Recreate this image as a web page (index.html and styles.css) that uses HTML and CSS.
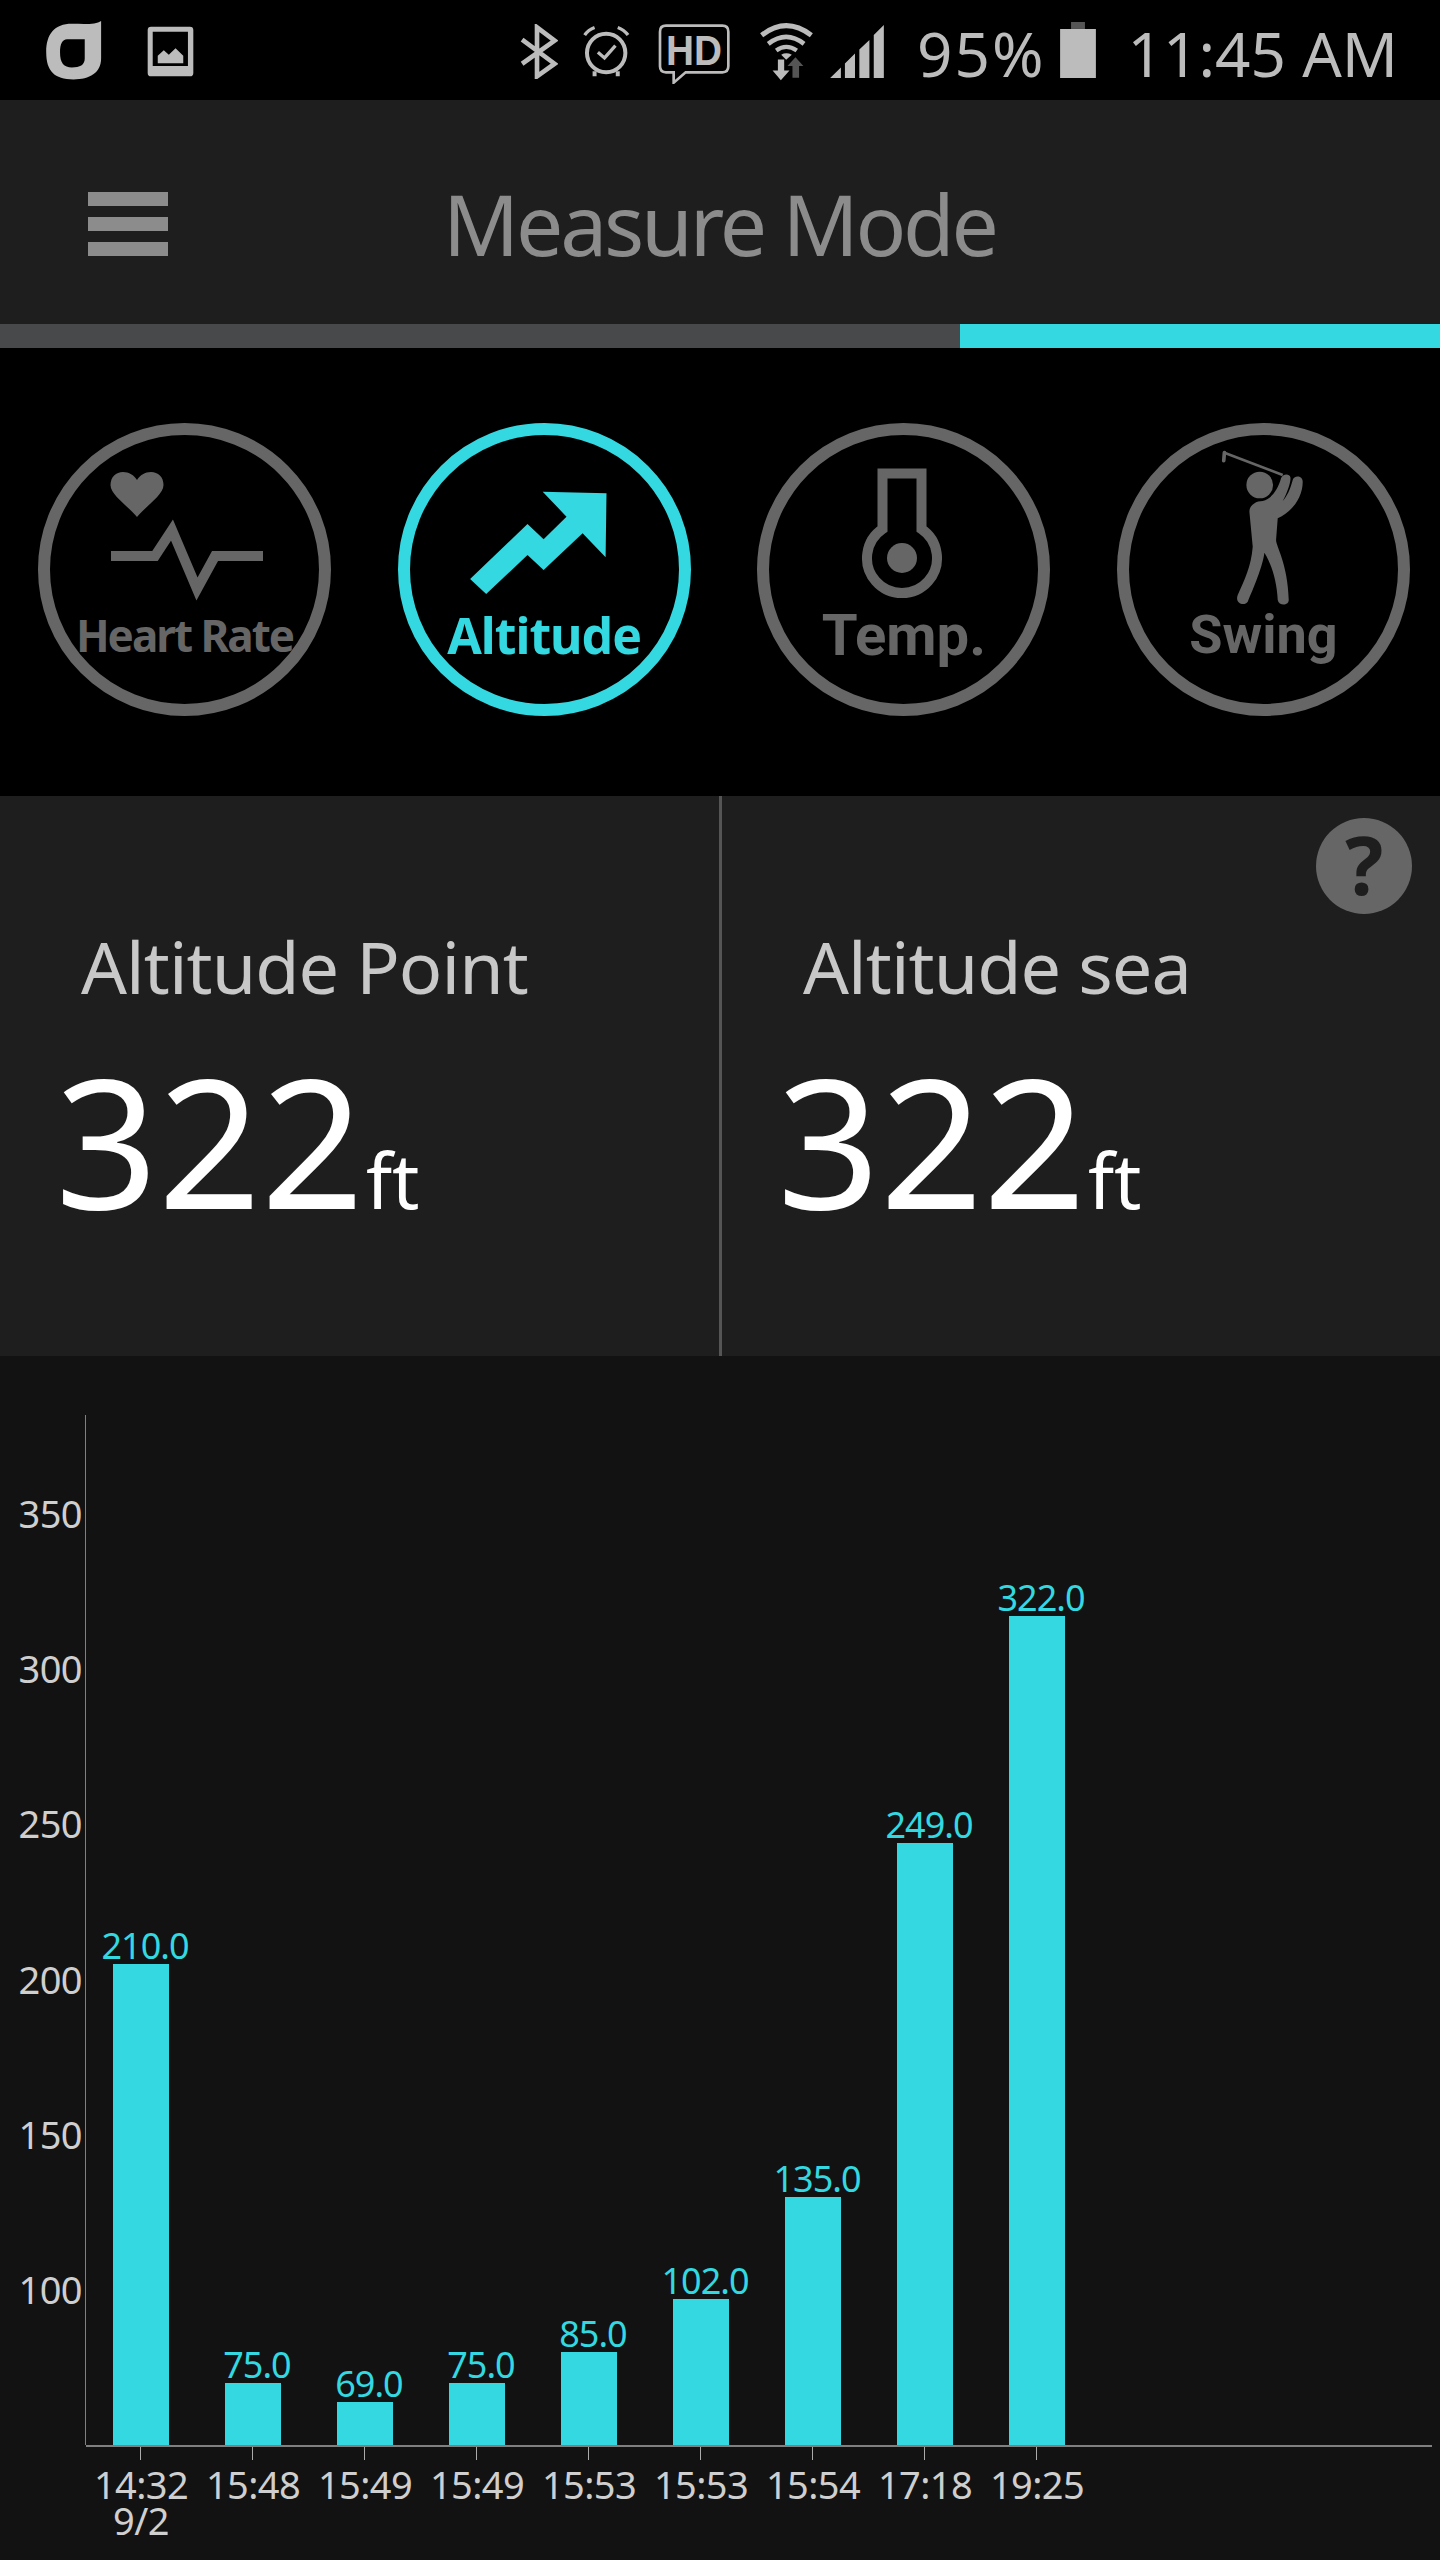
FILE: index.html
```html
<!DOCTYPE html>
<html lang="en">
<head>
    <meta charset="UTF-8">
    <meta name="viewport" content="width=device-width, initial-scale=1.0">
    <title>Measure Mode</title>
    <link rel="stylesheet" href="styles.css">
</head>
<body>

    <div class="status-bar">
        <svg class="st-logo" viewBox="40 30 180 190"><path d="M216 33V150C216 195 180 215 130 215C70 215 45 190 45 130C45 75 70 42 125 42C165 42 200 45 216 33ZM110 90C95 90 88 105 88 130C88 165 100 178 125 178C150 178 165 170 165 150V90Z" fill-rule="evenodd"/></svg>
        <svg class="st-pic" viewBox="350 46 140 152"><path d="M352 58Q352 48 362 48H478Q488 48 488 58V186Q488 196 478 196H362Q352 196 352 186ZM367 63V165H472V63ZM382 157V135L400 118L415 132L435 112L458 135V157Z" fill-rule="evenodd"/></svg>
        <span class="st-spacer"></span>
        <svg class="st-bt" viewBox="36 40 114 166"><path d="M42 87L140 160L87 198V50L140 90L42 160" class="line" stroke-width="14"/></svg>
        <svg class="st-alarm" viewBox="220 46 142 156">
            <circle cx="290" cy="130" r="58" class="line" stroke-width="12"/>
            <path d="M225 76Q236 60 255 53M325 53Q344 60 356 76" class="line" stroke-width="10"/>
            <path d="M265 128L285 145L318 108" class="line" stroke-width="10"/>
            <path d="M255 185V200M325 185V200" class="line" stroke-width="12"/>
        </svg>
        <svg class="st-hd" viewBox="444 42 216 180">
            <path d="M468 47H637Q655 47 655 65V169Q655 187 637 187H527L491 218V187H468Q450 187 450 169V65Q450 47 468 47Z" class="line" stroke-width="8"/>
            <text x="468" y="165" class="hd-text" textLength="168" lengthAdjust="spacingAndGlyphs">HD</text>
        </svg>
        <svg class="st-wifi" viewBox="26 32 166 178">
            <path d="M34 72Q108 14 184 72" class="line" stroke-width="15"/>
            <path d="M54 98Q108 56 162 98" class="line" stroke-width="14"/>
            <path d="M78 118Q108 96 140 118" class="line" stroke-width="13"/>
            <path d="M93 131Q108 122 125 131L108 146Z"/>
            <path d="M83 145H102V178H118L92 208L67 178H83Z"/>
            <path d="M127 200V165H112L136 138L160 165H147V200Z" class="dim"/>
        </svg>
        <svg class="st-signal" viewBox="238 45 160 158"><path d="M238 203L270 172V203ZM282 203V160L312 130V203ZM325 203V118L355 90V203ZM368 203V75L398 45V203Z"/></svg>
        <span class="st-text st-percent">95%</span>
        <svg class="st-battery" viewBox="933 36 108 169"><path d="M966 36H1008V57H966Z" class="dim"/><path d="M933 57H1041V205H933Z"/></svg>
        <span class="st-text st-time">11:45 AM</span>
    </div>

    <div class="header">
        <div class="menu-icon"><span></span><span></span><span></span></div>
        <h1>Measure Mode</h1>
    </div>
    <div class="progress"><div class="progress-done"></div></div>

    <div class="modes">
        <div class="mode">
            <svg class="mode-icon" viewBox="0 0 273 190">
                <path d="M89 84C80 73 62.500 62 62.500 52C62.500 44 68 39 75 39C81 39 86 42 89 47C92 42 97 39 103 39C110 39 115.500 44 115.500 52C115.500 62 98 73 89 84Z"/>
                <path d="M63 123H107L124 97L149 156L167 123H215" class="line" stroke-width="10"/>
            </svg>
            <span class="mode-label label-heart">Heart Rate</span>
        </div>
        <div class="mode mode-active">
            <svg class="mode-icon" viewBox="0 0 273 190">
                <path d="M134.700 58.700L198.500 60.300L197.600 124.300L174.600 100.300L135.600 137L119.500 122L78.200 161L62.100 146L119.500 91L135.600 106.300L158.500 83.700Z"/>
            </svg>
            <span class="mode-label label-altitude">Altitude</span>
        </div>
        <div class="mode">
            <svg class="mode-icon" viewBox="0 0 273 190">
                <path d="M115.500 96V40.500H154.500V96A35 35 0 1 1 115.500 96Z" class="line" stroke-width="10"/>
                <circle cx="135" cy="125" r="15"/>
            </svg>
            <span class="mode-label label-temp">Temp.</span>
        </div>
        <div class="mode">
            <svg class="mode-icon" viewBox="0 0 273 190">
                <g transform="translate(72.400 7) scale(.3333)">
                    <circle cx="181" cy="135" r="40"/>
                    <path d="M75 38L250 105" class="line" stroke-width="8"/>
                    <path d="M75 38L73 62" class="line" stroke-width="11" stroke-linecap="round"/>
                    <path d="M150 215C150 195 170 183 190 183C215 178 235 150 245 115C248 102 270 98 273 112C275 120 268 150 250 183C262 170 272 150 280 120C283 105 310 105 310 125C310 170 280 215 235 235L230 300C230 320 265 370 268 480C268 498 238 498 235 480C232 420 215 370 195 338C190 380 160 450 145 485C135 500 105 490 115 465C135 420 155 380 160 320Z"/>
                </g>
            </svg>
            <span class="mode-label label-swing">Swing</span>
        </div>
    </div>

    <div class="readouts">
        <div class="readout">
            <div class="readout-title">Altitude Point</div>
            <div class="readout-value">322<span class="unit">ft</span></div>
        </div>
        <div class="readout">
            <div class="readout-title">Altitude sea</div>
            <div class="readout-value">322<span class="unit">ft</span></div>
        </div>
        <div class="help">?</div>
    </div>

    <div class="chart">
        <div class="y-axis">
            <div class="y-tick">100</div>
            <div class="y-tick">150</div>
            <div class="y-tick">200</div>
            <div class="y-tick">250</div>
            <div class="y-tick">300</div>
            <div class="y-tick">350</div>
        </div>
        <div class="plot">
            <div class="bars" id="bars"></div>
            <div class="x-labels" id="xLabels"></div>
        </div>
    </div>

    <script>
      const readings = [
          { time: "14:32", date: "9/2", value: 210 },
          { time: "15:48", value: 75 },
          { time: "15:49", value: 69 },
          { time: "15:49", value: 75 },
          { time: "15:53", value: 85 },
          { time: "15:53", value: 102 },
          { time: "15:54", value: 135 },
          { time: "17:18", value: 249 },
          { time: "19:25", value: 322 }
      ];

      const barsEl = document.getElementById("bars");
      const labelsEl = document.getElementById("xLabels");

      readings.forEach(r => {
          // axis starts at 55, 3.105px per unit
          const height = (r.value - 55) * 3.105;
          barsEl.insertAdjacentHTML("beforeend",
              `<div class="bar-slot"><span class="bar-value">${r.value.toFixed(1)}</span><div class="bar" style="height:${height}px"></div></div>`);
          const date = r.date ? `<br>${r.date}` : "";
          labelsEl.insertAdjacentHTML("beforeend", `<div class="x-label">${r.time}${date}</div>`);
      });
    </script>

</body>
</html>
```

FILE: styles.css
```css
* {
    box-sizing: border-box;
    margin: 0;
    padding: 0;
}

body {
    width: 1440px;
    height: 2560px;
    overflow: hidden;
    background: #000;
    font-family: "Noto Sans", "Open Sans", sans-serif;
}

svg {
    display: block;
    fill: currentColor;
    flex: none;
}

svg .line {
    fill: none;
    stroke: currentColor;
}

svg .dim {
    fill: #555;
}

/* status bar */
.status-bar {
    display: flex;
    align-items: flex-start;
    height: 100px;
    padding: 22px 42px 0 44px;
    color: #bcbcbc;
}

.st-logo { width: 59px; height: 61px; margin-top: -2px; }
.st-pic { width: 47px; height: 51px; margin: 4px 0 0 44px; }
.st-spacer { flex: 1; }
.st-bt { width: 38px; height: 55px; margin-top: 2px; }
.st-alarm { width: 47px; height: 52px; margin: 3px 0 0 25px; }
.st-hd { width: 72px; height: 60px; margin: 2px 0 0 28px; }
.st-wifi { width: 55px; height: 59px; margin: 0 0 0 29px; }
.st-signal { width: 54px; height: 53px; margin: 3px 0 0 16px; }
.st-battery { width: 36px; height: 56px; margin: 0 0 0 14px; }

.hd-text {
    font-family: "Liberation Sans", sans-serif;
    font-weight: 700;
    font-size: 130px;
}

.st-text {
    font-size: 62px;
    line-height: 62px;
    margin-top: 0;
}

.st-percent { margin-left: 33px; letter-spacing: 2px; }
.st-time { margin-left: 32px; }

/* header */
.header {
    display: flex;
    align-items: center;
    height: 224px;
    padding: 23px 0 0 88px;
    background: #1e1e1e;
    color: #8c8c8c;
}

.menu-icon {
    display: flex;
    flex-direction: column;
    gap: 11px;
    width: 80px;
}

.menu-icon span {
    height: 14px;
    background: #8c8c8c;
}

.header h1 {
    margin-left: 275px;
    font-size: 84px;
    line-height: 100px;
    font-weight: 400;
    letter-spacing: -3.2px;
}

.progress {
    height: 24px;
    background: #48494b;
    display: flex;
    justify-content: flex-end;
}

.progress-done {
    width: 480px;
    background: #33d8e0;
}

/* mode buttons */
.modes {
    display: flex;
    height: 448px;
    padding: 75px 30px 0 38px;
    justify-content: space-between;
}

.mode {
    display: flex;
    flex-direction: column;
    align-items: center;
    width: 293px;
    height: 293px;
    border: 12px solid #666;
    border-radius: 50%;
    color: #666;
}

.mode-icon {
    width: 273px;
    height: 190px;
    margin-top: -2px;
}

.mode-active {
    border-color: #33d8e0;
    color: #33d8e0;
}

.mode-label {
    margin-top: -18px;
    line-height: 60px;
    font-weight: 700;
    white-space: nowrap;
}

.label-heart { font-size: 44px; letter-spacing: -2px; }
.label-altitude { font-size: 50px; letter-spacing: -1px; }
.label-temp { font-family: Roboto, sans-serif; font-size: 58px; }
.label-swing { font-family: Roboto, sans-serif; font-size: 54px; }

/* readouts */
.readouts {
    position: relative;
    display: flex;
    height: 560px;
    background: #1e1e1e;
}

.readout {
    width: 720px;
    padding: 120px 0 0 55px;
}

.readout + .readout {
    border-left: 3px solid #555;
    margin-left: -1px;
}

.readout-title {
    margin-left: 26px;
    font-size: 72px;
    line-height: 100px;
    letter-spacing: -0.9px;
    color: #c8c8c8;
}

.readout-value {
    margin-top: 24px;
    font-size: 180px;
    line-height: 200px;
    color: #fff;
}

.unit {
    margin-left: 2px;
    font-size: 76px;
}

.help {
    position: absolute;
    top: 22px;
    right: 28px;
    width: 96px;
    height: 96px;
    border-radius: 50%;
    background: #666;
    color: #1e1e1e;
    font-size: 80px;
    font-weight: 700;
    line-height: 92px;
    text-align: center;
}

/* chart */
.chart {
    display: flex;
    align-items: flex-start;
    height: 1204px;
    padding-top: 59px;
    background: #121212;
    color: #cfcfcf;
}

.y-axis {
    display: flex;
    flex-direction: column-reverse;
    justify-content: flex-start;
    width: 86px;
    height: 1030px;
    padding: 0 0 137px;
    border-right: 1px solid #808080;
    font-size: 38px;
}

.y-tick {
    height: 155.250px;
    flex: none;
    display: flex;
    align-items: flex-end;
    justify-content: flex-end;
    line-height: 38px;
    letter-spacing: -0.6px;
    padding-right: 3px;
}

.plot {
    width: 1346px;
}

.bars {
    display: flex;
    align-items: flex-end;
    height: 1030px;
    padding-left: 27px;
}

.bar-slot {
    display: flex;
    flex-direction: column;
    align-items: center;
    width: 56px;
    margin-right: 56px;
    flex: none;
}

.bar {
    width: 56px;
    background: #33d8e0;
}

.bar-value {
    padding-left: 8px;
    color: #33d8e0;
    font-size: 36px;
    line-height: 36px;
    letter-spacing: -1px;
    white-space: nowrap;
}

.x-labels {
    display: flex;
    padding-left: 27px;
    border-top: 2px solid #808080;
}

.x-label {
    position: relative;
    width: 112px;
    margin-left: -28px;
    margin-right: 28px;
    padding-top: 19px;
    font-size: 38px;
    line-height: 36px;
    letter-spacing: -0.6px;
    text-align: center;
    flex: none;
}

/* tick mark hanging under the axis */
.x-label::before {
    content: "";
    position: absolute;
    top: 0;
    left: 55px;
    width: 1px;
    height: 13px;
    background: #aaa;
}
```
